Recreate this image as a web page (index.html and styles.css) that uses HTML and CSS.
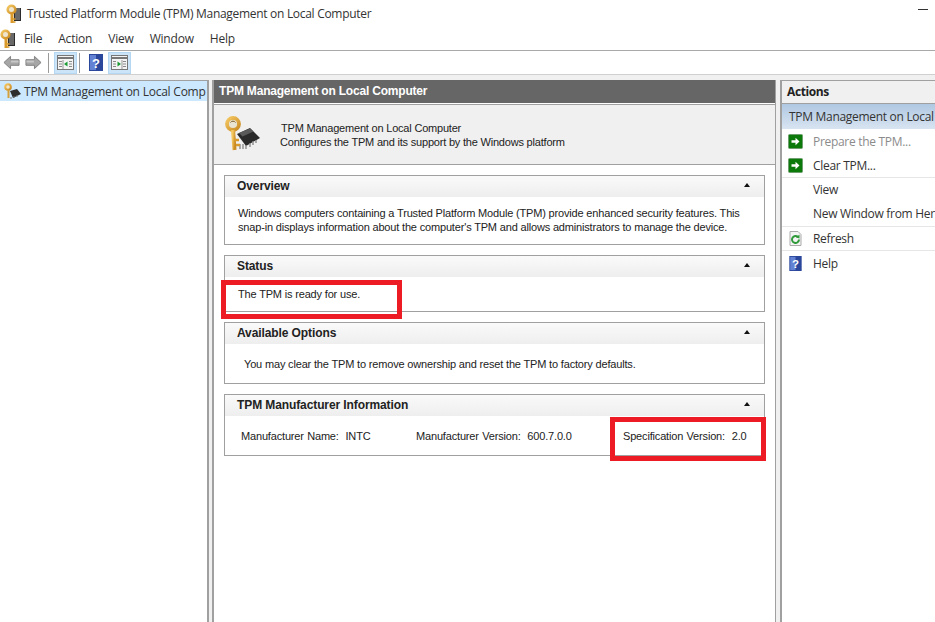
FILE: index.html
```html
<!DOCTYPE html>
<html lang="en">
<head>
<meta charset="utf-8">
<title>Trusted Platform Module (TPM) Management on Local Computer</title>
<link rel="stylesheet" href="styles.css">
</head>
<body>
<svg class="defs" width="0" height="0" aria-hidden="true">
  <defs>
    <linearGradient id="gold" x1="0" y1="0" x2="1" y2="1">
      <stop offset="0" stop-color="#f4c761"/>
      <stop offset="1" stop-color="#c98a22"/>
    </linearGradient>
    <symbol id="key" viewBox="0 0 16 20">
      <rect x="8" y="4" width="7" height="13" fill="#2c2c2c"/>
      <path d="M9 5h5M9 7h5M9 9h5M9 11h5M9 13h5M9 15h5" stroke="#a5a5a5" stroke-width="1"/>
      <circle cx="5.500" cy="5.500" r="3.800" fill="#efe6cf" stroke="url(#gold)" stroke-width="2.600"/>
      <path d="M6 9v10" stroke="#d99a2b" stroke-width="3" fill="none"/>
      <path d="M7 15h2.500M7 18h2.500" stroke="#d99a2b" stroke-width="1.500" fill="none"/>
    </symbol>
    <symbol id="arrow" viewBox="0 0 15 15">
      <rect x=".5" y=".5" width="14" height="14" rx="1" fill="#0b7a0b" stroke="#6f9f6f"/>
      <path d="M3.500 6.200h4V3.800l4 3.700-4 3.700V8.800h-4z" fill="#fff"/>
    </symbol>
    <symbol id="help" viewBox="0 0 14 17">
      <rect width="14" height="17" fill="#2b479c"/>
      <rect x="1" y="1" width="6" height="15" fill="#6482d4"/>
      <text x="7" y="13.500" text-anchor="middle" font-family="Liberation Sans" font-weight="700" font-size="13" fill="#fff">?</text>
    </symbol>
  </defs>
</svg>

<div class="window">
  <header class="titlebar">
    <svg class="title-icon"><use href="#key"/></svg>
    <span class="title-text">Trusted Platform Module (TPM) Management on Local Computer</span>
    <span class="minimize"></span>
  </header>

  <nav class="menubar">
    <svg class="menu-icon"><use href="#key"/></svg>
    <span class="menu-item">File</span>
    <span class="menu-item">Action</span>
    <span class="menu-item">View</span>
    <span class="menu-item">Window</span>
    <span class="menu-item">Help</span>
  </nav>

  <div class="toolbar">
    <svg class="nav-arrow" viewBox="0 0 18 15"><path d="M1 7.500 8 1v3.500h9v6H8V14z" fill="#a6a6a6" stroke="#7f7f7f"/><path d="M8.500 5.500h8v2h-8z" fill="#c8c8c8"/></svg>
    <svg class="nav-arrow" viewBox="0 0 18 15"><path d="M17 7.500 10 1v3.500H1v6h9V14z" fill="#a6a6a6" stroke="#7f7f7f"/><path d="M1.500 5.500h8v2h-8z" fill="#c8c8c8"/></svg>
    <span class="tool-sep"></span>
    <span class="tool-btn">
      <svg class="pane-icon" viewBox="0 0 17 15"><rect x=".5" y=".5" width="16" height="14" fill="#f4f4f4" stroke="#777"/><path d="M1 3h15" stroke="#777" stroke-width="2"/><path d="M6 5v9" stroke="#999"/><path d="M2 6.500h3M2 9h3M2 11.500h3M12 6.500h3M12 9h3M12 11.500h3" stroke="#888"/><path d="M10.500 6.500v5L7 9z" fill="#1b9a35"/></svg>
    </span>
    <span class="tool-sep tool-sep-wide"></span>
    <svg class="tool-help"><use href="#help"/></svg>
    <span class="tool-btn">
      <svg class="pane-icon" viewBox="0 0 17 15"><rect x=".5" y=".5" width="16" height="14" fill="#f4f4f4" stroke="#777"/><path d="M1 3h15" stroke="#777" stroke-width="2"/><path d="M11 5v9" stroke="#999"/><path d="M2 6.500h3M2 9h3M2 11.500h3M12 6.500h3M12 9h3M12 11.500h3" stroke="#888"/><path d="M6.500 6.500v5L10 9z" fill="#1b9a35"/></svg>
    </span>
  </div>

  <main class="panes">
    <aside class="tree">
      <div class="tree-row">
        <svg class="tree-icon" viewBox="0 0 18 16"><path d="M7 8l7-2 4 5-8 4z" fill="#2d2d2d"/><path d="M8 14v2M11 13v2M14 12v2" stroke="#777"/><circle cx="5" cy="4" r="2.800" fill="#efe6cf" stroke="url(#gold)" stroke-width="2"/><path d="M5.500 7v8" stroke="#d3a03c" stroke-width="2"/></svg>
        <span>TPM Management on Local Comp</span>
      </div>
    </aside>

    <section class="center">
      <h1 class="center-head">TPM Management on Local Computer</h1>
      <div class="intro">
        <svg class="intro-icon" viewBox="0 0 36 36">
          <path d="M13 18l13-6 10 10-14 8z" fill="#2a2a2a"/>
          <path d="M15 17l11-4.500 3.500 3-11 5z" fill="#5a5a5a"/>
          <path d="M16 28v5M19 28v5M22 29v4M26 27v4M29 25v4M32 24v3" stroke="#8c8c8c" stroke-width="1.400"/>
          <circle cx="9" cy="8" r="6" fill="#e9e3d2" stroke="url(#gold)" stroke-width="3.800"/>
          <path d="M6.500 6.500a3 3 0 0 1 5 0" fill="none" stroke="#7a5a20" stroke-width="1"/>
          <path d="M9 14l1.500 20" stroke="url(#gold)" stroke-width="4"/>
          <path d="M11 24h4M12 29h4" stroke="#d89a2c" stroke-width="2.400"/>
        </svg>
        <div class="intro-text">
          <div class="intro-first">TPM Management on Local Computer</div>
          <div>Configures the TPM and its support by the Windows platform</div>
        </div>
      </div>

      <div class="sections">
        <section class="card card-overview">
          <h2 class="card-head">Overview<span class="caret"></span></h2>
          <p class="overview-text">Windows computers containing a Trusted Platform Module (TPM) provide enhanced security features. This snap-in displays information about the computer's TPM and allows administrators to manage the device.</p>
        </section>
        <section class="card card-status">
          <h2 class="card-head">Status<span class="caret"></span></h2>
          <p class="status-text">The TPM is ready for use.</p>
        </section>
        <section class="card card-options">
          <h2 class="card-head">Available Options<span class="caret"></span></h2>
          <p class="options-text">You may clear the TPM to remove ownership and reset the TPM to factory defaults.</p>
        </section>
        <section class="card card-info">
          <h2 class="card-head">TPM Manufacturer Information<span class="caret"></span></h2>
          <div class="info-row">
            <span class="info-name">Manufacturer Name:&nbsp;&nbsp;INTC</span>
            <span class="info-version">Manufacturer Version:&nbsp;&nbsp;600.7.0.0</span>
            <span class="info-spec">Specification Version:&nbsp;&nbsp;2.0</span>
          </div>
        </section>
      </div>
    </section>

    <aside class="actions">
      <h2 class="actions-head">Actions</h2>
      <div class="actions-sub">TPM Management on Local</div>
      <ul class="action-list">
        <li class="action-row action-disabled"><svg class="action-icon"><use href="#arrow"/></svg>Prepare the TPM...</li>
        <li class="action-row action-line"><svg class="action-icon"><use href="#arrow"/></svg>Clear TPM...</li>
        <li class="action-row"><span class="action-icon"></span>View</li>
        <li class="action-row action-line"><span class="action-icon"></span>New Window from Her</li>
        <li class="action-row action-line">
          <svg class="action-icon" viewBox="0 0 15 15"><path d="M2 .5h8l3 3v11H2z" fill="#f4f4f4" stroke="#aaa"/><path d="M11 8.500a3.500 3.500 0 1 1-1-2.500" fill="none" stroke="#2f9a3a" stroke-width="2"/><path d="M8 6.500l3.500 1V3.500z" fill="#2f9a3a"/></svg>
          Refresh</li>
        <li class="action-row"><svg class="action-icon"><use href="#help"/></svg>Help</li>
      </ul>
    </aside>

    <div class="mark mark-status"></div>
    <div class="mark mark-spec"></div>
  </main>
</div>
</body>
</html>
```

FILE: styles.css
```css
* { box-sizing: border-box; }
html, body { margin: 0; height: 100%; }
body { background: #fff; font-family: "Open Sans", "Liberation Sans", sans-serif; color: #222; overflow: hidden; }
.defs { position: absolute; }
.window { width: 935px; height: 622px; display: flex; flex-direction: column; overflow: hidden; }

.titlebar { height: 27px; display: flex; align-items: center; padding-left: 6px; font-size: 12px; letter-spacing: -0.3px; }
.title-icon { width: 16px; height: 20px; margin-right: 5px; }
.title-text { flex: 1; color: #333; }
.minimize { width: 10px; height: 1px; background: #333; margin-right: 7px; margin-bottom: 9px; }

.menubar { height: 24px; display: flex; align-items: center; gap: 16px; font-size: 12px; letter-spacing: -0.2px; border-bottom: 1px solid #a9a9a9; }
.menu-icon { width: 16px; height: 20px; margin-right: -8px; }
.menu-item { color: #333; }

.toolbar { height: 24px; display: flex; align-items: center; padding-left: 3px; border-bottom: 1px solid #d0d0d0; }
.nav-arrow { width: 17px; height: 15px; margin-right: 5px; }
.tool-sep { width: 1px; height: 20px; background: #9a9a9a; margin: 0 5px 0 1px; }
.tool-sep-wide { margin: 0 9px 0 2px; }
.tool-btn { width: 23px; height: 22px; display: flex; align-items: center; justify-content: center; background: #cce4f7; border: 1px solid #b5d7f2; }
.pane-icon { width: 17px; height: 15px; }
.tool-help { width: 14px; height: 17px; margin-right: 5px; }

.panes { flex: 1; display: flex; background: #f0f0f0; padding-top: 5px; position: relative; min-height: 0; }
.tree { width: 209px; background: #fff; border: 1px solid #a0a0a0; border-width: 1px 2px 0 0; }
.tree-row { height: 20px; display: flex; align-items: center; gap: 3px; background: #cce8ff; font-size: 12px; letter-spacing: -0.23px; color: #333; white-space: nowrap; overflow: hidden; padding-left: 3px; }
.tree-icon { width: 18px; height: 16px; flex: none; }

.center { width: 564px; margin-left: 3px; background: #fff; border-right: 1px solid #a0a0a0; border-left: 2px solid #a0a0a0; }
.center-head { margin: 0; height: 23px; background: #666; color: #fff; font-family: "Liberation Sans", sans-serif; font-size: 12px; font-weight: 700; line-height: 23px; padding-left: 5px; letter-spacing: -0.2px; }
.intro { height: 61px; margin-top: 1px; background: #f0f0f0; border-bottom: 1px solid #a0a0a0; border-top: 1px solid #a0a0a0; display: flex; padding: 11px 0 0 10px; font-family: "Liberation Sans", sans-serif; font-size: 11px; letter-spacing: -0.2px; color: #222; }
.intro-icon { width: 36px; height: 36px; }
.intro-text { margin: 5px 0 0 20px; line-height: 14px; }
.intro-first { margin-left: 1px; }

.sections { display: flex; flex-direction: column; gap: 10px; padding: 10px 10px 0; }
.card { border: 1px solid #a0a0a0; font-family: "Liberation Sans", sans-serif; font-size: 11px; letter-spacing: -0.17px; }
.card-head { margin: 0; height: 21px; padding-left: 12px; line-height: 20px; font-size: 12px; font-weight: 700; letter-spacing: -0.1px; color: #222; background: linear-gradient(#fafafa, #eeeeee); position: relative; }
.caret { position: absolute; right: 14px; top: 7px; border: 3px solid transparent; border-top: 0; border-bottom: 4px solid #111; }
.card-overview { height: 70px; }
.card-status { height: 57px; }
.card-options { height: 62px; }
.card-info { height: 62px; }
.overview-text { margin: 9px 8px 0 13px; line-height: 14px; }
.status-text { margin: 10px 0 0 13px; line-height: 14px; }
.options-text { margin: 13px 0 0 19px; line-height: 14px; }
.info-row { display: flex; padding: 13px 0 0 16px; line-height: 14px; word-spacing: 0.5px; }
.info-name { width: 175px; }
.info-version { width: 207px; }

.actions { flex: 1; margin-left: 4px; background: #fff; border-left: 2px solid #a0a0a0; border-top: 1px solid #a0a0a0; min-width: 0; font-size: 12px; letter-spacing: -0.3px; color: #333; }
.actions-head { margin: 0; height: 23px; padding-left: 5px; background: #f0f0f0; font-size: 12px; line-height: 22px; font-weight: 700; color: #222; border-bottom: 1px solid #a0a0a0; letter-spacing: -0.4px; }
.actions-sub { height: 25px; line-height: 25px; padding-left: 7px; white-space: nowrap; background: linear-gradient(#b0c8e2, #d8e4f1); }
.action-list { list-style: none; margin: 0; padding: 0; }
.action-row { height: 24.400px; display: flex; align-items: center; padding-left: 6px; white-space: nowrap; }
.action-line { border-bottom: 1px solid #e6e6e6; }
.action-disabled { color: #8b8b8b; }
.action-icon { width: 15px; height: 15px; flex: none; margin-right: 10px; }

.mark { position: absolute; border: 5px solid #ed1c24; }
.mark-status { left: 221px; top: 205px; width: 181px; height: 39px; }
.mark-spec { left: 610px; top: 342px; width: 156px; height: 44px; }
```
